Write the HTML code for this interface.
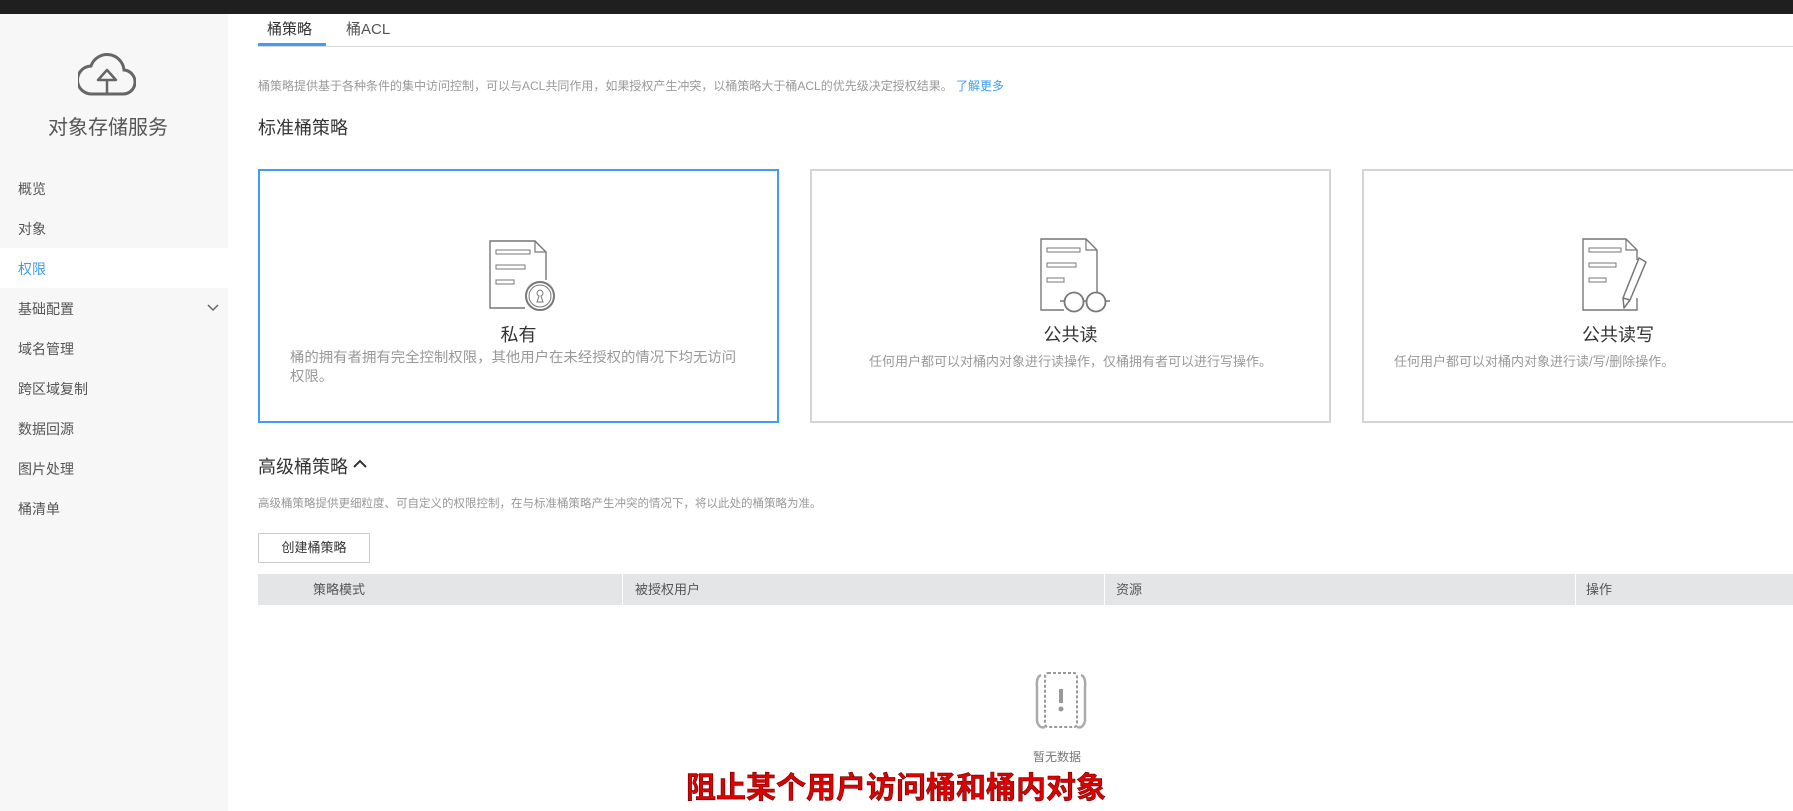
<!DOCTYPE html>
<html><head><meta charset="utf-8"><style>
*{margin:0;padding:0;box-sizing:border-box}
body{width:1793px;height:811px;overflow:hidden;background:#fff;font-family:"Liberation Sans","Noto Sans CJK SC",sans-serif;position:relative;color:#333}
.a{position:absolute;white-space:nowrap}
#top{left:0;top:0;width:1793px;height:14px;background:#1f1f1f}
#side{left:0;top:14px;width:228px;height:797px;background:#f7f7f7}
.mi{position:absolute;left:18px;font-size:14px;color:#555;line-height:20px}
.card{position:absolute;top:169px;width:521px;height:254px;border:2px solid #d4d4d4;background:#fff}
.card.sel{border-color:#3f9cf7}
.ct{position:absolute;width:100%;text-align:center;top:150px;font-size:18px;color:#333}
.cd{position:absolute;left:30px;right:30px;top:181px;font-size:13px;color:#999;line-height:19px;white-space:normal}
.th{position:absolute;top:574px;height:31px;background:#e3e5e6;font-size:13px;color:#555;line-height:31px}
</style></head><body>
<div class="a" id="top"></div>
<div class="a" id="side">
<svg style="position:absolute;left:78px;top:36px" width="58" height="48" viewBox="0 0 58 48"><path d="M14 44 H44 A12 12 0 0 0 46 20 A17 17 0 0 0 13 16 A14 14 0 0 0 14 44 Z" fill="none" stroke="#666" stroke-width="3"/><path d="M29 44 V30 M20 30 L29 20 L38 30 Z" fill="none" stroke="#666" stroke-width="2.5" stroke-linejoin="round"/></svg>
<div class="a" style="left:0;width:216px;text-align:center;top:97px;font-size:20px;color:#555">对象存储服务</div>
<div class="mi" style="top:165px">概览</div>
<div class="mi" style="top:205px">对象</div>
<div style="position:absolute;left:0;top:234px;width:228px;height:40px;background:#fff"></div>
<div class="mi" style="top:245px;color:#3f9cf7">权限</div>
<div class="mi" style="top:285px">基础配置</div>
<svg style="position:absolute;left:207px;top:290px" width="12" height="8"><path d="M1 1 L6 6 L11 1" fill="none" stroke="#666" stroke-width="1.5"/></svg>
<div class="mi" style="top:325px">域名管理</div>
<div class="mi" style="top:365px">跨区域复制</div>
<div class="mi" style="top:405px">数据回源</div>
<div class="mi" style="top:445px">图片处理</div>
<div class="mi" style="top:485px">桶清单</div>
</div>
<div class="a" style="left:267px;top:18px;font-size:15px;color:#333">桶策略</div>
<div class="a" style="left:346px;top:18px;font-size:15px;color:#555">桶ACL</div>
<div class="a" style="left:258px;top:46px;width:1535px;height:1px;background:#d6d6d6"></div>
<div class="a" style="left:258px;top:43px;width:68px;height:3px;background:#3f9cf7"></div>
<div class="a" style="left:258px;top:77px;font-size:12px;color:#999">桶策略提供基于各种条件的集中访问控制，可以与ACL共同作用，如果授权产生冲突，以桶策略大于桶ACL的优先级决定授权结果。 <span style="color:#3f9cf7">了解更多</span></div>
<div class="a" style="left:258px;top:114px;font-size:18px;color:#333">标准桶策略</div>

<div class="card sel" style="left:258px">
<svg style="position:absolute;left:229px;top:69px" width="68" height="72" viewBox="0 0 68 72"><path d="M57 40 V12 L46 1 H1 V68 H36" fill="none" stroke="#777" stroke-width="1.4"/><path d="M46 1 V12 H57" fill="none" stroke="#777" stroke-width="1.2"/><rect x="7" y="10" width="34" height="4" fill="none" stroke="#777"/><rect x="7" y="25" width="29" height="4" fill="none" stroke="#777"/><rect x="7" y="40" width="18" height="4" fill="none" stroke="#777"/><path d="M41 50 A10 10 0 0 1 60 50" fill="none" stroke="#777" stroke-width="2.5"/><circle cx="51" cy="56" r="14" fill="#fff" stroke="#777" stroke-width="2"/><circle cx="51" cy="56" r="11" fill="none" stroke="#777" stroke-width="1"/><path d="M48 62 H54 L52 56 A3 3 0 1 0 50 56 Z" fill="none" stroke="#777"/></svg>
<div class="ct">私有</div>
<div class="cd" style="right:28px;font-size:14.4px;line-height:19px;top:178px">桶的拥有者拥有完全控制权限，其他用户在未经授权的情况下均无访问权限。</div>
</div>
<div class="card" style="left:810px">
<svg style="position:absolute;left:228px;top:67px" width="74" height="76" viewBox="0 0 74 76"><path d="M57 55 V12 L46 1 H1 V72 H24" fill="none" stroke="#777" stroke-width="1.4"/><path d="M46 1 V12 H57" fill="none" stroke="#777" stroke-width="1.2"/><rect x="7" y="10" width="33" height="4" fill="none" stroke="#777"/><rect x="7" y="25" width="29" height="4" fill="none" stroke="#777"/><rect x="7" y="40" width="17" height="4" fill="none" stroke="#777"/><circle cx="34" cy="64" r="9.5" fill="#fff" stroke="#777" stroke-width="1.8"/><circle cx="56" cy="64" r="9.5" fill="#fff" stroke="#777" stroke-width="1.8"/><path d="M43.5 63 H46.5 M24.5 63 H20 M65.5 63 H70" stroke="#777" stroke-width="1.5"/></svg>
<div class="ct">公共读</div>
<div class="cd" style="text-align:center">任何用户都可以对桶内对象进行读操作，仅桶拥有者可以进行写操作。</div>
</div>
<div class="card" style="left:1362px">
<svg style="position:absolute;left:218px;top:67px" width="70" height="78" viewBox="0 0 70 78"><path d="M55 22 V12 L44 1 H1 V72 H55 V60" fill="none" stroke="#777" stroke-width="1.4"/><path d="M44 1 V12 H55" fill="none" stroke="#777" stroke-width="1.2"/><rect x="7" y="10" width="32" height="4" fill="none" stroke="#777"/><rect x="7" y="25" width="27" height="4" fill="none" stroke="#777"/><rect x="7" y="40" width="17" height="4" fill="none" stroke="#777"/><path d="M57 20 L64 24 L48 62 L42 70 L41 60 Z M41 60 L48 62" fill="#fff" stroke="#777" stroke-width="1.5" stroke-linejoin="round"/></svg>
<div class="ct" style="text-align:left;left:218px">公共读写</div>
<div class="cd" style="left:30px">任何用户都可以对桶内对象进行读/写/删除操作。</div>
</div>

<div class="a" style="left:258px;top:453px;font-size:18px;color:#333">高级桶策略</div>
<svg style="position:absolute;left:353px;top:459px" width="14" height="10"><path d="M1 8 L7 2 L13 8" fill="none" stroke="#333" stroke-width="2"/></svg>
<div class="a" style="left:258px;top:495px;font-size:11.5px;color:#999">高级桶策略提供更细粒度、可自定义的权限控制，在与标准桶策略产生冲突的情况下，将以此处的桶策略为准。</div>
<div class="a" style="left:258px;top:533px;width:112px;height:30px;border:1px solid #ccc;font-size:13px;color:#333;text-align:center;line-height:28px">创建桶策略</div>
<div class="th" style="left:258px;width:364px;padding-left:55px">策略模式</div>
<div class="th" style="left:623px;width:481px;padding-left:12px">被授权用户</div>
<div class="th" style="left:1105px;width:470px;padding-left:11px">资源</div>
<div class="th" style="left:1576px;width:217px;padding-left:10px">操作</div>
<svg style="position:absolute;left:1035px;top:671px" width="52" height="60" viewBox="0 0 52 60"><path d="M6 4 Q1 6 2 16 V50 Q4 58 10 56" fill="none" stroke="#aaa" stroke-width="2.5"/><path d="M46 4 Q51 6 50 16 V50 Q48 58 42 56" fill="none" stroke="#aaa" stroke-width="2.5"/><rect x="10" y="2" width="32" height="54" rx="3" fill="#fff" stroke="#999" stroke-width="2" stroke-dasharray="3 2"/><path d="M26 18 V32" stroke="#999" stroke-width="4"/><circle cx="26" cy="38" r="2.5" fill="#999"/></svg>
<div class="a" style="left:1033px;top:748px;font-size:12px;color:#777">暂无数据</div>
<div class="a" style="left:686px;top:771px;font-size:30px;font-weight:bold;color:#e00000;line-height:36px;-webkit-text-stroke:0.6px #600">阻止某个用户访问桶和桶内对象</div>
</body></html>
